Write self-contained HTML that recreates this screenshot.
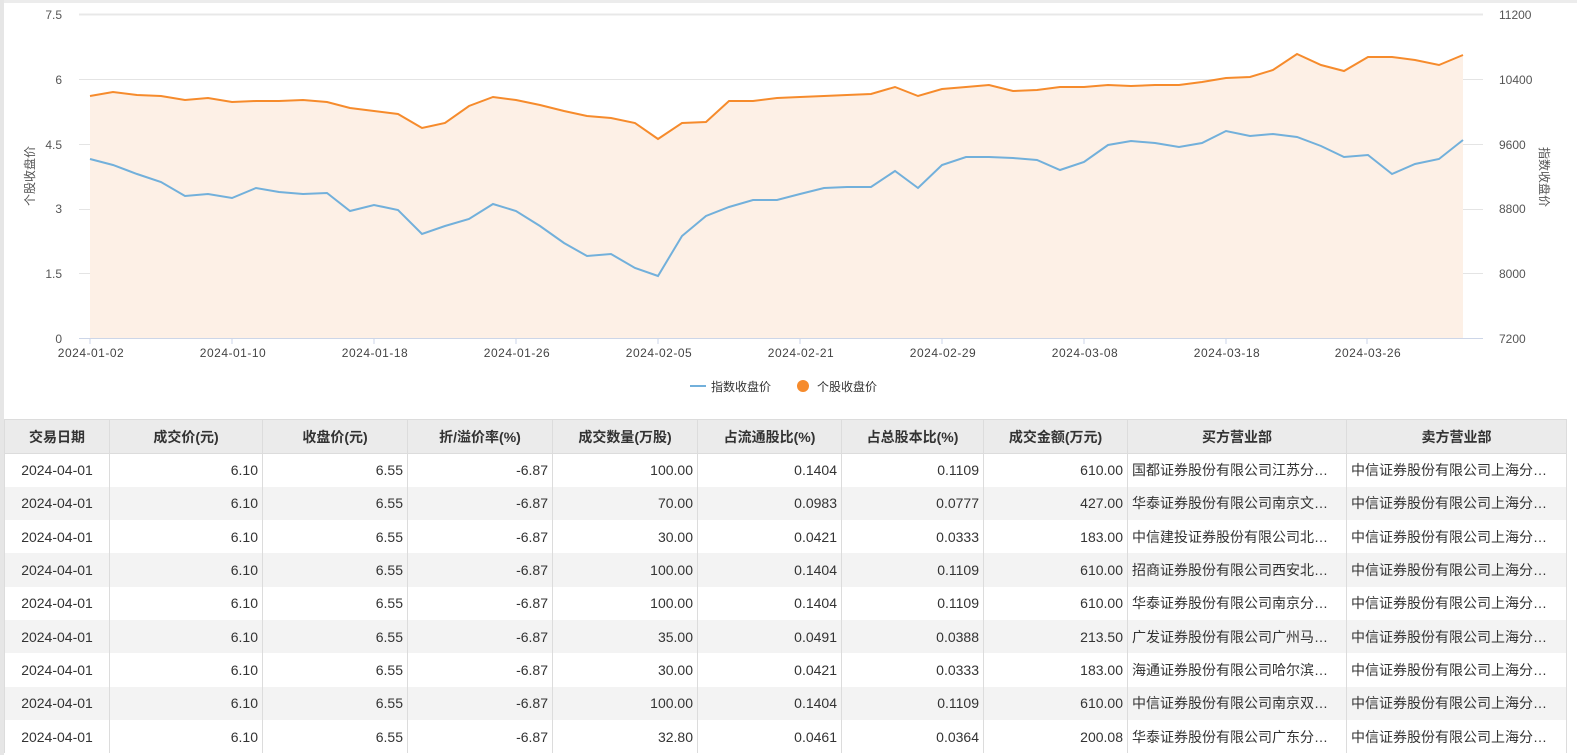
<!DOCTYPE html>
<html><head><meta charset="utf-8"><style>
body{margin:0;width:1577px;height:755px;overflow:hidden;background:#fff;font-family:"Liberation Sans","Noto Sans CJK SC",sans-serif;position:relative}
.top{position:absolute;left:0;top:0;width:1577px;height:3px;background:#ececec}
.lft{position:absolute;left:0;top:0;width:4px;height:755px;background:#e6e6e6}
svg{position:absolute;left:0;top:0}
table{position:absolute;left:4px;top:419px;width:1562px;border-collapse:collapse;font-size:14px;color:#333;table-layout:fixed}
th{background:#ebebeb;font-weight:bold;height:34px;border:1px solid #dcdcdc;text-align:center;color:#333;padding:0;box-sizing:border-box}
td{height:33.3px;box-sizing:border-box;border-left:1px solid #dcdcdc;border-right:1px solid #dcdcdc;padding:0 4px;text-align:right;white-space:nowrap;overflow:hidden}
td:first-child{text-align:center}
td.l{text-align:left}
tr:nth-child(odd) td{background:#f3f3f3}
</style></head><body>
<div class="top"></div><div class="lft"></div>
<svg width="1577" height="415" font-family="Liberation Sans,Noto Sans CJK SC,sans-serif">
<g stroke="#e4e4e4" stroke-width="1">
<line x1="79" y1="14.5" x2="1483" y2="14.5" stroke="#e8e8e8" stroke-width="2"/>
<line x1="79" y1="79.5" x2="1483" y2="79.5"/>
<line x1="79" y1="144.5" x2="1483" y2="144.5"/>
<line x1="79" y1="209.5" x2="1483" y2="209.5"/>
<line x1="79" y1="273.5" x2="1483" y2="273.5"/>
</g>
<polygon fill="#fdf0e6" points="90,338 90,96 113,92 137,95 161,96 185,100 208,98 232,102 256,101 279,101 303,100 327,102 350,108 374,111 398,114 422,128 445,123 469,106 493,97 516,100 540,105 564,111 587,116 611,118 635,123 658,139 682,123 706,122 729,101 753,101 777,98 800,97 824,96 847,95 871,94 895,87 918,96 942,89 966,87 989,85 1013,91 1037,90 1060,87 1084,87 1108,85 1131,86 1155,85 1179,85 1202,82 1226,78 1250,77 1273,70 1297,54 1321,65 1344,71 1368,57 1392,57 1415,60 1439,65 1463,55 1463,338"/>
<line x1="79" y1="338.5" x2="1483" y2="338.5" stroke="#cdd6e8"/>
<g stroke="#cdd6e8"><line x1="90" y1="338" x2="90" y2="344"/><line x1="232" y1="338" x2="232" y2="344"/><line x1="374" y1="338" x2="374" y2="344"/><line x1="516" y1="338" x2="516" y2="344"/><line x1="658" y1="338" x2="658" y2="344"/><line x1="800" y1="338" x2="800" y2="344"/><line x1="942" y1="338" x2="942" y2="344"/><line x1="1084" y1="338" x2="1084" y2="344"/><line x1="1226" y1="338" x2="1226" y2="344"/><line x1="1367" y1="338" x2="1367" y2="344"/></g>
<polyline fill="none" stroke="#f68b2c" stroke-width="2" points="90,96 113,92 137,95 161,96 185,100 208,98 232,102 256,101 279,101 303,100 327,102 350,108 374,111 398,114 422,128 445,123 469,106 493,97 516,100 540,105 564,111 587,116 611,118 635,123 658,139 682,123 706,122 729,101 753,101 777,98 800,97 824,96 847,95 871,94 895,87 918,96 942,89 966,87 989,85 1013,91 1037,90 1060,87 1084,87 1108,85 1131,86 1155,85 1179,85 1202,82 1226,78 1250,77 1273,70 1297,54 1321,65 1344,71 1368,57 1392,57 1415,60 1439,65 1463,55"/>
<polyline fill="none" stroke="#72b0db" stroke-width="2" points="90,159 113,165 137,174 161,182 185,196 208,194 232,198 256,188 279,192 303,194 327,193 350,211 374,205 398,210 422,234 445,226 469,219 493,204 516,211 540,226 564,243 587,256 611,254 635,268 658,276 682,236 706,216 729,207 753,200 777,200 800,194 824,188 847,187 871,187 895,171 918,188 942,165 966,157 989,157 1013,158 1037,160 1060,170 1084,162 1108,145 1131,141 1155,143 1179,147 1202,143 1226,131 1250,136 1273,134 1297,137 1321,146 1344,157 1368,155 1392,174 1415,164 1439,159 1463,140"/>
<g font-size="12" fill="#555" text-anchor="end"><text x="62" y="19">7.5</text><text x="62" y="84">6</text><text x="62" y="149">4.5</text><text x="62" y="213">3</text><text x="62" y="278">1.5</text><text x="62" y="343">0</text></g>
<g font-size="12" fill="#555"><text x="1499" y="19">11200</text><text x="1499" y="84">10400</text><text x="1499" y="149">9600</text><text x="1499" y="213">8800</text><text x="1499" y="278">8000</text><text x="1499" y="343">7200</text></g>
<g font-size="12" fill="#444" text-anchor="middle" letter-spacing="0.5"><text x="91" y="357">2024-01-02</text><text x="233" y="357">2024-01-10</text><text x="375" y="357">2024-01-18</text><text x="517" y="357">2024-01-26</text><text x="659" y="357">2024-02-05</text><text x="801" y="357">2024-02-21</text><text x="943" y="357">2024-02-29</text><text x="1085" y="357">2024-03-08</text><text x="1227" y="357">2024-03-18</text><text x="1368" y="357">2024-03-26</text></g>
<text transform="translate(34,176) rotate(-90)" font-size="12" fill="#555" text-anchor="middle">个股收盘价</text>
<text transform="translate(1540,177) rotate(90)" font-size="12" fill="#555" text-anchor="middle">指数收盘价</text>
<line x1="690" y1="386" x2="706" y2="386" stroke="#72b0db" stroke-width="2"/>
<text x="711" y="391" font-size="12" fill="#333">指数收盘价</text>
<circle cx="803" cy="386" r="6" fill="#f68b2c"/>
<text x="817" y="391" font-size="12" fill="#333">个股收盘价</text>
</svg>
<table>
<colgroup><col style="width:105px"><col style="width:153px"><col style="width:145px"><col style="width:145px"><col style="width:145px"><col style="width:144px"><col style="width:142px"><col style="width:144px"><col style="width:219px"><col style="width:220px"></colgroup>
<tr><th>交易日期</th><th>成交价(元)</th><th>收盘价(元)</th><th>折/溢价率(%)</th><th>成交数量(万股)</th><th>占流通股比(%)</th><th>占总股本比(%)</th><th>成交金额(万元)</th><th>买方营业部</th><th>卖方营业部</th></tr>
<tr><td>2024-04-01</td><td>6.10</td><td>6.55</td><td>-6.87</td><td>100.00</td><td>0.1404</td><td>0.1109</td><td>610.00</td><td class="l">国都证券股份有限公司江苏分…</td><td class="l">中信证券股份有限公司上海分…</td></tr>
<tr><td>2024-04-01</td><td>6.10</td><td>6.55</td><td>-6.87</td><td>70.00</td><td>0.0983</td><td>0.0777</td><td>427.00</td><td class="l">华泰证券股份有限公司南京文…</td><td class="l">中信证券股份有限公司上海分…</td></tr>
<tr><td>2024-04-01</td><td>6.10</td><td>6.55</td><td>-6.87</td><td>30.00</td><td>0.0421</td><td>0.0333</td><td>183.00</td><td class="l">中信建投证券股份有限公司北…</td><td class="l">中信证券股份有限公司上海分…</td></tr>
<tr><td>2024-04-01</td><td>6.10</td><td>6.55</td><td>-6.87</td><td>100.00</td><td>0.1404</td><td>0.1109</td><td>610.00</td><td class="l">招商证券股份有限公司西安北…</td><td class="l">中信证券股份有限公司上海分…</td></tr>
<tr><td>2024-04-01</td><td>6.10</td><td>6.55</td><td>-6.87</td><td>100.00</td><td>0.1404</td><td>0.1109</td><td>610.00</td><td class="l">华泰证券股份有限公司南京分…</td><td class="l">中信证券股份有限公司上海分…</td></tr>
<tr><td>2024-04-01</td><td>6.10</td><td>6.55</td><td>-6.87</td><td>35.00</td><td>0.0491</td><td>0.0388</td><td>213.50</td><td class="l">广发证券股份有限公司广州马…</td><td class="l">中信证券股份有限公司上海分…</td></tr>
<tr><td>2024-04-01</td><td>6.10</td><td>6.55</td><td>-6.87</td><td>30.00</td><td>0.0421</td><td>0.0333</td><td>183.00</td><td class="l">海通证券股份有限公司哈尔滨…</td><td class="l">中信证券股份有限公司上海分…</td></tr>
<tr><td>2024-04-01</td><td>6.10</td><td>6.55</td><td>-6.87</td><td>100.00</td><td>0.1404</td><td>0.1109</td><td>610.00</td><td class="l">中信证券股份有限公司南京双…</td><td class="l">中信证券股份有限公司上海分…</td></tr>
<tr><td>2024-04-01</td><td>6.10</td><td>6.55</td><td>-6.87</td><td>32.80</td><td>0.0461</td><td>0.0364</td><td>200.08</td><td class="l">华泰证券股份有限公司广东分…</td><td class="l">中信证券股份有限公司上海分…</td></tr>
</table>
</body></html>
